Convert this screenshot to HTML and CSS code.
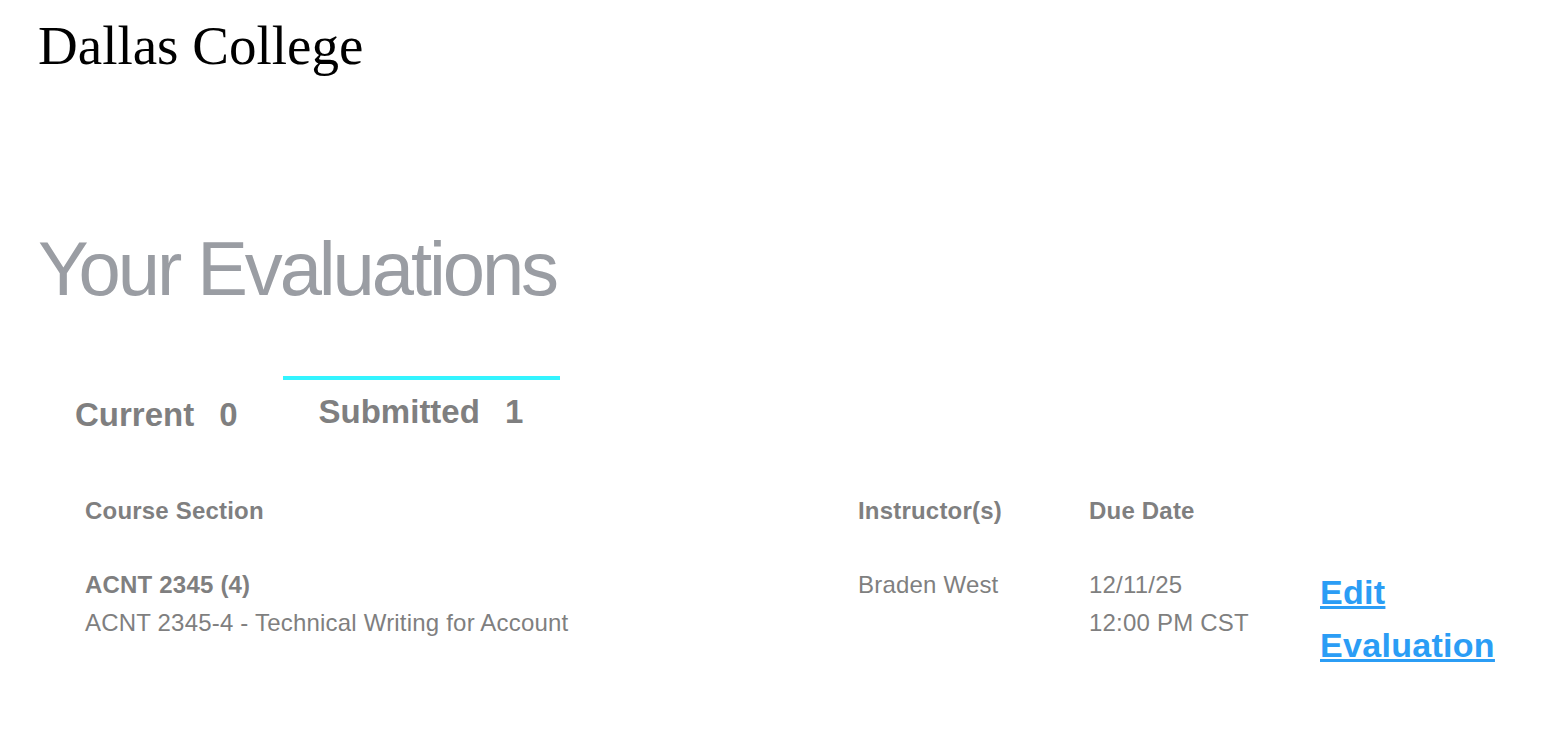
FILE: index.html
```html
<!DOCTYPE html>
<html lang="en">
<head>
	<meta charset="UTF-8">
	<title>Your Evaluations</title>
	<link rel="stylesheet" href="styles.css">
</head>
<body>
<header class="site-header">
	<div class="brand">Dallas College</div>
</header>
<main class="page">
	<h1 class="page-title">Your Evaluations</h1>
	<ul class="tabs">
		<li class="tab">Current<span class="count">0</span></li>
		<li class="tab active">Submitted<span class="count">1</span></li>
	</ul>
	<table class="evals">
		<thead>
			<tr>
				<th class="col-course">Course Section</th>
				<th class="col-instructor">Instructor(s)</th>
				<th class="col-due">Due Date</th>
				<th class="col-action"></th>
			</tr>
		</thead>
		<tbody>
			<tr>
				<td>
					<div class="course-code">ACNT 2345 (4)</div>
					<div>ACNT 2345-4 - Technical Writing for Account</div>
				</td>
				<td>Braden West</td>
				<td>
					<div>12/11/25</div>
					<div>12:00 PM CST</div>
				</td>
				<td><a class="edit-link" href="#">Edit Evaluation</a></td>
			</tr>
		</tbody>
	</table>
</main>
</body>
</html>
```

FILE: styles.css
```css
body {
	margin: 0;
	background: #fff;
	font-family: "Liberation Sans", Arial, sans-serif;
}
.site-header {
	padding: 18px 0 0 38px;
}
.brand {
	font-family: "Liberation Serif", "Times New Roman", serif;
	font-size: 55px;
	line-height: 55px;
	color: #000;
}
.page {
	padding-left: 38px;
}
.page-title {
	margin: 158px 0 0;
	font-size: 76px;
	line-height: 76px;
	font-weight: normal;
	letter-spacing: -3.1px;
	color: #9a9da3;
}
.tabs {
	display: flex;
	gap: 8px;
	margin: 69px 0 0;
	padding: 0;
	list-style: none;
}
.tab {
	padding: 15px 37px 12px;
	border-top: 4px solid transparent;
	font-size: 33px;
	line-height: 40px;
	font-weight: bold;
	color: #7f7f80;
	cursor: pointer;
}
.tab.active {
	padding: 12px 37px 15px 36px;
	border-top-color: #33f4ff;
}
.count {
	margin-left: 25px;
}
.evals {
	margin: 45px 0 0 47px;
	border-collapse: collapse;
	font-size: 24px;
	line-height: 38px;
	letter-spacing: 0.2px;
	color: #7f7f80;
}
.evals th,
.evals td {
	padding: 0;
	text-align: left;
	vertical-align: top;
}
.evals th {
	padding-bottom: 36px;
	font-weight: bold;
}
.col-course {
	width: 773px;
}
.col-instructor,
.col-due {
	width: 231px;
}
.col-action {
	width: 200px;
}
.course-code {
	font-weight: bold;
}
.edit-link {
	display: block;
	font-size: 34px;
	line-height: 53px;
	font-weight: bold;
	letter-spacing: 0.3px;
	color: #2b9df5;
	text-decoration-thickness: 3px;
}
```
